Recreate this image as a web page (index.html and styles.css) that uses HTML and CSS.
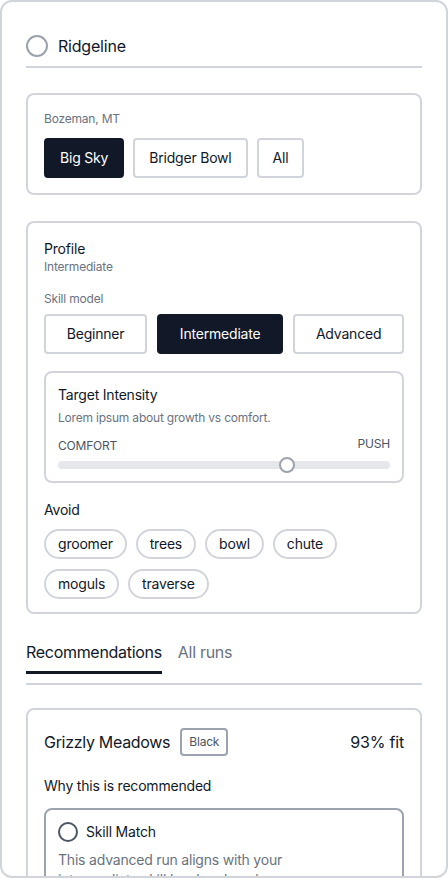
FILE: index.html
```html
<!DOCTYPE html>
<html lang="en">
<head>
<meta charset="utf-8">
<title>Ridgeline</title>
<link rel="stylesheet" href="styles.css">
</head>
<body>
<div class="app">
  <header class="header">
    <span class="logo-circle"></span>
    <span class="brand">Ridgeline</span>
  </header>

  <section class="card location">
    <div class="muted-label">Bozeman, MT</div>
    <div class="btn-row">
      <button class="btn active">Big Sky</button>
      <button class="btn">Bridger Bowl</button>
      <button class="btn">All</button>
    </div>
  </section>

  <section class="card profile">
    <div class="title">Profile</div>
    <div class="sub">Intermediate</div>
    <div class="muted-label skill-label">Skill model</div>
    <div class="seg-row">
      <button class="btn seg">Beginner</button>
      <button class="btn seg active">Intermediate</button>
      <button class="btn seg">Advanced</button>
    </div>

    <div class="intensity">
      <div class="title">Target Intensity</div>
      <div class="desc">Lorem ipsum about growth vs comfort.</div>
      <div class="scale-labels">
        <span>COMFORT</span>
        <span class="push">PUSH</span>
      </div>
      <div class="track">
        <span class="thumb" style="left: calc(70% - 11px);"></span>
      </div>
    </div>

    <div class="title avoid-label">Avoid</div>
    <div class="chips">
      <span class="chip">groomer</span>
      <span class="chip">trees</span>
      <span class="chip">bowl</span>
      <span class="chip">chute</span>
      <span class="chip">moguls</span>
      <span class="chip">traverse</span>
    </div>
  </section>

  <nav class="tabs">
    <span class="tab active">Recommendations</span>
    <span class="tab">All runs</span>
  </nav>

  <section class="card rec">
    <div class="rec-head">
      <span class="run-name">Grizzly Meadows</span>
      <span class="badge">Black</span>
      <span class="fit">93% fit</span>
    </div>
    <div class="why">Why this is recommended</div>
    <div class="reason">
      <div class="reason-head">
        <span class="reason-circle"></span>
        <span class="reason-title">Skill Match</span>
      </div>
      <p class="reason-text">This advanced run aligns with your intermediate skill level and goals.</p>
    </div>
  </section>
</div>
</body>
</html>
```

FILE: styles.css
```css
* { box-sizing: border-box; }

html, body {
  margin: 0;
  padding: 0;
  background: #ffffff;
}

body {
  font-family: Inter, "Noto Sans", "Liberation Sans", sans-serif;
  color: #111827;
  font-size: 14px;
  line-height: 20px;
  letter-spacing: -0.2px;
}

.app {
  width: 448px;
  height: 878px;
  border: 2px solid #d1d5db;
  border-radius: 12px;
  padding: 24px;
  overflow: hidden;
  background: #fff;
}

.header {
  display: flex;
  align-items: center;
  gap: 10px;
  height: 42px;
  border-bottom: 2px solid #d1d5db;
}

.logo-circle {
  width: 22px;
  height: 22px;
  border: 2px solid #9ca3af;
  border-radius: 50%;
  flex: none;
}

.brand {
  font-size: 16px;
  line-height: 24px;
}

.card {
  border: 2px solid #d1d5db;
  border-radius: 8px;
  padding: 16px 16px;
}

.location {
  margin-top: 25px;
  padding-bottom: 15px;
}

.muted-label {
  font-size: 12px;
  line-height: 16px;
  color: #6b7280;
}

.btn-row {
  display: flex;
  gap: 9px;
  margin-top: 11px;
}

.btn {
  font-family: inherit;
  font-size: 14px;
  line-height: 20px;
  letter-spacing: -0.2px;
  height: 40px;
  padding: 0 14px;
  background: #fff;
  color: #111827;
  border: 2px solid #d1d5db;
  border-radius: 4px;
  cursor: pointer;
}

.btn.active {
  background: #111827;
  border-color: #111827;
  color: #fff;
}

.profile {
  margin-top: 26px;
  padding-top: 16px;
  padding-bottom: 13px;
}

.title {
  font-size: 14px;
  line-height: 20px;
}

.sub {
  font-size: 12px;
  line-height: 16px;
  color: #6b7280;
}

.skill-label {
  margin-top: 16px;
}

.seg-row {
  display: flex;
  gap: 10px;
  margin-top: 7px;
}

.seg {
  flex: 1 1 auto;
  padding: 0;
}

.intensity {
  margin-top: 17px;
  border: 2px solid #d1d5db;
  border-radius: 8px;
  padding: 12px 12px 8px;
}

.desc {
  font-size: 12px;
  line-height: 16px;
  color: #6b7280;
  margin-top: 5px;
}

.scale-labels {
  display: flex;
  justify-content: space-between;
  margin-top: 12px;
  font-size: 12px;
  line-height: 16px;
  color: #4b5563;
}

.scale-labels .push {
  position: relative;
  top: -2px;
}

.track {
  position: relative;
  height: 8px;
  margin: 7px 0 4px;
  background: #e5e7eb;
  border-radius: 4px;
}

.thumb {
  position: absolute;
  top: -4px;
  width: 16px;
  height: 16px;
  border-radius: 50%;
  background: #fff;
  border: 2px solid #9ca3af;
}

.avoid-label {
  margin-top: 17px;
}

.chips {
  display: flex;
  flex-wrap: wrap;
  gap: 10px 9px;
  margin-top: 9px;
}

.chip {
  font-size: 14px;
  line-height: 18px;
  padding: 4px 12px;
  border: 2px solid #d1d5db;
  border-radius: 999px;
}

.tabs {
  display: flex;
  gap: 16px;
  margin-top: 26px;
  padding-bottom: 9px;
  border-bottom: 2px solid #d1d5db;
}

.tab {
  font-size: 16px;
  line-height: 24px;
  letter-spacing: -0.3px;
  color: #6b7280;
  padding-bottom: 7px;
  border-bottom: 3px solid transparent;
}

.tab.active {
  color: #111827;
  border-bottom-color: #111827;
}

.rec {
  margin-top: 23px;
  padding-top: 18px;
}

.rec-head {
  display: flex;
  align-items: center;
  gap: 10px;
}

.run-name {
  font-size: 16px;
  line-height: 24px;
  letter-spacing: -0.3px;
}

.badge {
  font-size: 12px;
  line-height: 16px;
  color: #4b5563;
  border: 2px solid #9ca3af;
  border-radius: 4px;
  padding: 4px 7px;
}

.fit {
  margin-left: auto;
  font-size: 16px;
  line-height: 24px;
}

.why {
  margin-top: 20px;
  font-size: 14px;
  line-height: 20px;
}

.reason {
  margin-top: 12px;
  border: 2px solid #9ca3af;
  border-radius: 8px;
  padding: 12px;
}

.reason-head {
  display: flex;
  align-items: center;
  gap: 8px;
}

.reason-circle {
  width: 20px;
  height: 20px;
  border: 2px solid #4b5563;
  border-radius: 50%;
  flex: none;
}

.reason-title {
  font-size: 14px;
  line-height: 20px;
}

.reason-text {
  margin: 8px 0 0;
  max-width: 250px;
  font-size: 14px;
  line-height: 20px;
  color: #6b7280;
}
```
